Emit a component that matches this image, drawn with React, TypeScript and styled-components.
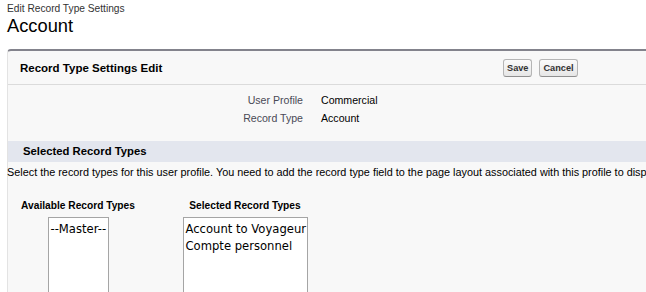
import React from 'react';
import styled, { createGlobalStyle } from 'styled-components';

const GlobalStyle = createGlobalStyle`
  html, body {
    margin: 0;
    padding: 0;
    background: #fff;
    overflow: hidden;
  }
  body {
    font-family: Arial, "Liberation Sans", Helvetica, sans-serif;
    color: #000;
  }
`;

const Page = styled.div`
  width: 646px;
  overflow: hidden;
  padding: 2px 0 0 7px;
  box-sizing: border-box;
`;

const Breadcrumb = styled.div`
  font-size: 10.2px;
  line-height: 13px;
  color: #333;
`;

const Title = styled.h1`
  margin: 0;
  font-size: 18.3px;
  font-weight: normal;
  line-height: 22px;
  color: #000;
`;

const Panel = styled.div`
  margin-top: 12px;
  margin-right: -40px;
  background: #f8f8f8;
  border-top: 2px solid #83838c;
  border-left: 1px solid #e3e3e3;
  border-radius: 4px 0 0 0;
  padding-bottom: 20px;
`;

const PanelHeader = styled.div`
  display: grid;
  grid-template-columns: 483px auto;
  align-items: center;
  height: 33px;
  padding-left: 12px;
  border-bottom: 1px solid #dbdbdb;
`;

const PanelTitle = styled.h2`
  margin: 0;
  font-size: 11.5px;
  font-weight: bold;
  color: #000;
`;

const ButtonRow = styled.div`
  display: flex;
  gap: 7px;
`;

const Button = styled.button`
  height: 18px;
  padding: 0 3px;
  font-family: Arial, "Liberation Sans", sans-serif;
  font-size: 9.2px;
  font-weight: bold;
  color: #333;
  background: linear-gradient(#fbfbfb, #e6e6e6);
  border: 1px solid #b5b5b5;
  border-bottom-color: #8f8f8f;
  border-radius: 3px;
  cursor: pointer;
`;

const DetailGrid = styled.div`
  display: grid;
  grid-template-columns: 295px auto;
  column-gap: 18px;
  grid-auto-rows: 18px;
  align-items: center;
  padding-top: 6px;
  font-size: 10.6px;
`;

const Label = styled.div`
  text-align: right;
  color: #4a4a56;
`;

const Value = styled.div`
  color: #000;
`;

const SectionHeader = styled.h3`
  margin: 14px 0 0;
  height: 21px;
  line-height: 21px;
  padding-left: 15px;
  background: #e3e6ee;
  font-size: 11.3px;
  font-weight: bold;
  color: #000;
`;

const Description = styled.p`
  margin: 0 0 0 -1px;
  line-height: 20px;
  font-size: 10.85px;
  white-space: nowrap;
  color: #000;
`;

const Columns = styled.div`
  display: flex;
  gap: 50px;
  margin-top: 17px;
  padding-left: 12px;
`;

const Column = styled.div<{ $width: number }>`
  width: ${({ $width }) => $width}px;
  display: flex;
  flex-direction: column;
  align-items: center;
  gap: 4px;
`;

const ColumnTitle = styled.div`
  font-size: 10.2px;
  line-height: 14px;
  font-weight: bold;
  white-space: nowrap;
  color: #000;
`;

const ListBox = styled.div<{ $width: number }>`
  width: ${({ $width }) => $width}px;
  height: 100px;
  box-sizing: border-box;
  padding: 3px 2px 2px;
  background: #fff;
  border: 1px solid #a5a5a5;
`;

const Option = styled.div`
  font-family: "DejaVu Sans", Verdana, sans-serif;
  font-size: 11.6px;
  line-height: 17px;
  white-space: nowrap;
  color: #000;
`;

export default function App() {
  const available = ['--Master--'];
  const selected = ['Account to Voyageur', 'Compte personnel'];

  return (
    <>
      <GlobalStyle />
      <Page>
        <Breadcrumb>Edit Record Type Settings</Breadcrumb>
        <Title>Account</Title>
        <Panel>
          <PanelHeader>
            <PanelTitle>Record Type Settings Edit</PanelTitle>
            <ButtonRow>
              <Button>Save</Button>
              <Button>Cancel</Button>
            </ButtonRow>
          </PanelHeader>
          <DetailGrid>
            <Label>User Profile</Label>
            <Value>Commercial</Value>
            <Label>Record Type</Label>
            <Value>Account</Value>
          </DetailGrid>
          <SectionHeader>Selected Record Types</SectionHeader>
          <Description>
            Select the record types for this user profile. You need to add the record type field to the page layout
            associated with this profile to display the record type options.
          </Description>
          <Columns>
            <Column $width={116}>
              <ColumnTitle>Available Record Types</ColumnTitle>
              <ListBox $width={61}>
                {available.map((item) => (
                  <Option key={item}>{item}</Option>
                ))}
              </ListBox>
            </Column>
            <Column $width={118}>
              <ColumnTitle>Selected Record Types</ColumnTitle>
              <ListBox $width={125}>
                {selected.map((item) => (
                  <Option key={item}>{item}</Option>
                ))}
              </ListBox>
            </Column>
          </Columns>
        </Panel>
      </Page>
    </>
  );
}
